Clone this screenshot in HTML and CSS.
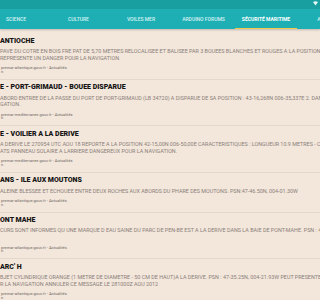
FILE: index.html
```html
<!DOCTYPE html>
<html lang="fr">
<head>
    <meta charset="UTF-8">
    <meta name="viewport" content="width=device-width, initial-scale=1.0">
    <title>Actualités</title>
    <link rel="stylesheet" href="styles.css">
</head>
<body>
    <!-- Barre d'état -->
    <div class="status-bar">
        <svg class="wifi" width="5" height="5" viewBox="0 0 10 10"><path d="M5 9 L0 2 Q5 -1.5 10 2 Z" fill="#e8f6f6"/></svg>
    </div>

    <!-- Onglets -->
    <div class="tabs">
        <div class="tabs-strip">
            <div class="tab">SCIENCE</div>
            <div class="tab">CULTURE</div>
            <div class="tab">VOILES MER</div>
            <div class="tab">ARDUINO FORUMS</div>
            <div class="tab active">SÉCURITÉ MARITIME</div>
            <div class="tab">AVIATION</div>
        </div>
    </div>

    <!-- Liste des articles -->
    <div class="list">
        <div class="item">
            <div class="item-title">ANTIOCHE</div>
            <div class="item-body">
                <div class="line">PAVE DU COTRE EN BOIS FRE PAT DE 5,70 METRES RELOCALISEE ET BALISEE PAR 3 BOUEES BLANCHES ET ROUGES A LA POSITION</div>
                <div class="line">REPRESENTE UN DANGER POUR LA NAVIGATION.</div>
            </div>
            <div class="item-source">premar-atlantique.gouv.fr - Actualités<br>n</div>
        </div>
        <div class="item">
            <div class="item-title">E - PORT-GRIMAUD - BOUEE DISPARUE</div>
            <div class="item-body">
                <div class="line">ABORD ENTREE DE LA PASSE DU PORT DE PORT-GRIMAUD (LB 34720) A DISPARUE DE SA POSITION : 43-16,268N 006-35,337E 2. DANS</div>
                <div class="line">GATION.</div>
            </div>
            <div class="item-source">premar-mediterranee.gouv.fr - Actualités<br>n</div>
        </div>
        <div class="item">
            <div class="item-title">E - VOILIER A LA DERIVE</div>
            <div class="item-body">
                <div class="line">A DERIVE LE 270954 UTC AOU 18 REPORTE A LA POSITION 42-15,00N 006-50,00E CARACTERISTIQUES : LONGUEUR 10.9 METRES - COQUE</div>
                <div class="line">ATS PANNEAU SOLAIRE A LARRIERE DANGEREUX POUR LA NAVIGATION.</div>
            </div>
            <div class="item-source">premar-mediterranee.gouv.fr - Actualités<br>n</div>
        </div>
        <div class="item">
            <div class="item-title">ANS - ILE AUX MOUTONS</div>
            <div class="item-body">
                <div class="line">ALEINE BLESSEE ET ECHOUEE ENTRE DEUX ROCHES AUX ABORDS DU PHARE DES MOUTONS. PSN:47-46.50N, 004-01.30W</div>
            </div>
            <div class="item-source">premar-atlantique.gouv.fr - Actualités<br>n</div>
        </div>
        <div class="item">
            <div class="item-title">ONT MAHE</div>
            <div class="item-body">
                <div class="line">CURS SONT INFORMES QU UNE MARQUE D EAU SAINE DU PARC DE PEN-BE EST A LA DERIVE DANS LA BAIE DE PONT-MAHE. PSN : 47-24</div>
                <div class="line">&nbsp;</div>
            </div>
            <div class="item-source">premar-atlantique.gouv.fr - Actualités<br>n</div>
        </div>
        <div class="item">
            <div class="item-title">ARC' H</div>
            <div class="item-body">
                <div class="line">BJET CYLINDRIQUE ORANGE (1 METRE DE DIAMETRE - 50 CM DE HAUT)A LA DERIVE. PSN : 47-35.25N, 004-21.93W PEUT PRESENTER</div>
                <div class="line">R LA NAVIGATION ANNULER CE MESSAGE LE 281000Z AOU 2012</div>
            </div>
            <div class="item-source">premar-atlantique.gouv.fr - Actualités<br>n</div>
        </div>
    </div>
</body>
</html>
```

FILE: styles.css
```css
/* Global */
body {
    margin: 0;
    padding: 0;
    width: 320px;
    height: 300px;
    overflow: hidden;
    background-color: #f3e6db;
    font-family: 'Roboto', sans-serif;
}

/* Barre d'état */
.status-bar {
    height: 9px;
    background-color: #1a9fa1;
    display: flex;
    justify-content: flex-end;
    align-items: flex-start;
    padding-top: 1px;
    box-sizing: border-box;
}

.wifi {
    margin-right: 2px;
}

/* Onglets */
.tabs {
    height: 20px;
    background-color: #1eafb5;
    overflow: hidden;
    box-shadow: 0 1px 2px rgba(0, 0, 0, 0.2);
    position: relative;
}

.tabs-strip {
    display: flex;
    margin-left: -15.25px;
    height: 100%;
}

.tab {
    flex: 0 0 62.5px;
    height: 100%;
    box-sizing: border-box;
    display: flex;
    justify-content: center;
    align-items: center;
    font-size: 5px;
    font-weight: 500;
    color: #d6f1f2;
    white-space: nowrap;
}

.tab.active {
    color: #ffffff;
    font-weight: 700;
    border-bottom: 1.5px solid #f3c74a;
    padding-top: 1.5px;
}

/* Liste */
.list {
    padding-top: 4.5px;
}

.item {
    padding: 3.5px 0 5.5px 0;
    border-bottom: 1px solid #e4d7cc;
    white-space: nowrap;
    overflow: hidden;
}

.item-title {
    font-size: 7px;
    line-height: 9px;
    font-weight: 900;
    color: #151515;
}

.item-body {
    margin-top: 2.1px;
    font-size: 5.4px;
    line-height: 6.8px;
    color: #8a817a;
}

.item-source {
    margin-top: 4.8px;
    font-size: 4px;
    line-height: 3.5px;
    color: #6d6864;
    padding-left: 1px;
}
```
